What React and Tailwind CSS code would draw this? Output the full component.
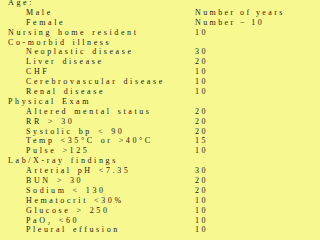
import React from 'react';

const rows = [
  { label: 'Age:', level: 0 },
  { label: 'Male', level: 1, value: 'Number of years' },
  { label: 'Female', level: 1, value: 'Number − 10' },
  { label: 'Nursing home resident', level: 0, value: '10' },
  { label: 'Co-morbid illness', level: 0 },
  { label: 'Neoplastic disease', level: 1, value: '30' },
  { label: 'Liver disease', level: 1, value: '20' },
  { label: 'CHF', level: 1, value: '10' },
  { label: 'Cerebrovascular disease', level: 1, value: '10' },
  { label: 'Renal disease', level: 1, value: '10' },
  { label: 'Physical Exam', level: 0 },
  { label: 'Altered mental status', level: 1, value: '20' },
  { label: 'RR > 30', level: 1, value: '20' },
  { label: 'Systolic bp < 90', level: 1, value: '20' },
  { label: 'Temp <35°C or >40°C', level: 1, value: '15' },
  { label: 'Pulse >125', level: 1, value: '10' },
  { label: 'Lab/X-ray findings', level: 0 },
  { label: 'Arterial pH <7.35', level: 1, value: '30' },
  { label: 'BUN > 30', level: 1, value: '20' },
  { label: 'Sodium < 130', level: 1, value: '20' },
  { label: 'Hematocrit <30%', level: 1, value: '10' },
  { label: 'Glucose > 250', level: 1, value: '10' },
  { label: 'PaO2', level: 1, value: '10', sub: true },
  { label: 'Pleural effusion', level: 1, value: '10' },
];

export default function App() {
  return (
    <div className="w-[320px] h-[240px] overflow-hidden bg-[#f8f890] text-[#1c1c10] font-['Liberation_Serif',serif] text-[8px] tracking-[2.6px] [word-spacing:1.5px]">
      <div className="-mt-[2px]">
        {rows.map((r, i) => (
          <div key={i} className="flex h-[9.9px] leading-[10px] whitespace-nowrap">
            <div className={`w-[195px] shrink-0 ${r.level === 0 ? 'pl-[8px]' : 'pl-[26px]'}`}>
              {r.sub ? (
                <span>PaO<sub className="text-[5px] align-[-1px]">2</sub> &lt;60</span>
              ) : r.label}
            </div>
            <div className="tracking-[2.4px] [word-spacing:0px]">{r.value}</div>
          </div>
        ))}
      </div>
    </div>
  );
}
